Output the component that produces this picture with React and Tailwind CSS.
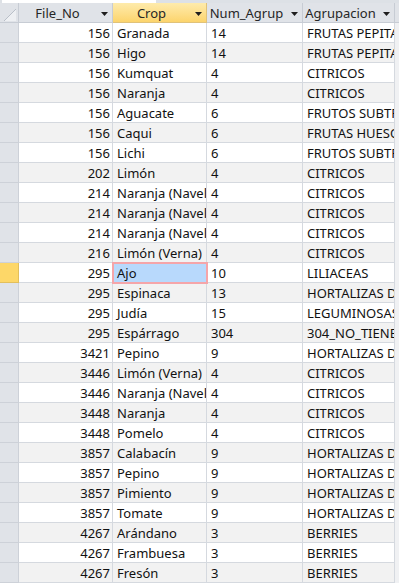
import React from "react";

const rows = [
  ["156", "Granada", "14", "FRUTAS PEPITA"],
  ["156", "Higo", "14", "FRUTAS PEPITA"],
  ["156", "Kumquat", "4", "CITRICOS"],
  ["156", "Naranja", "4", "CITRICOS"],
  ["156", "Aguacate", "6", "FRUTOS SUBTROPICALES"],
  ["156", "Caqui", "6", "FRUTAS HUESO"],
  ["156", "Lichi", "6", "FRUTOS SUBTROPICALES"],
  ["202", "Limón", "4", "CITRICOS"],
  ["214", "Naranja (Navel)", "4", "CITRICOS"],
  ["214", "Naranja (Navel)", "4", "CITRICOS"],
  ["214", "Naranja (Navel)", "4", "CITRICOS"],
  ["216", "Limón (Verna)", "4", "CITRICOS"],
  ["295", "Ajo", "10", "LILIACEAS"],
  ["295", "Espinaca", "13", "HORTALIZAS DE HOJA"],
  ["295", "Judía", "15", "LEGUMINOSAS"],
  ["295", "Espárrago", "304", "304_NO_TIENE_GRUPO"],
  ["3421", "Pepino", "9", "HORTALIZAS DE FRUTO"],
  ["3446", "Limón (Verna)", "4", "CITRICOS"],
  ["3446", "Naranja (Navel)", "4", "CITRICOS"],
  ["3448", "Naranja", "4", "CITRICOS"],
  ["3448", "Pomelo", "4", "CITRICOS"],
  ["3857", "Calabacín", "9", "HORTALIZAS DE FRUTO"],
  ["3857", "Pepino", "9", "HORTALIZAS DE FRUTO"],
  ["3857", "Pimiento", "9", "HORTALIZAS DE FRUTO"],
  ["3857", "Tomate", "9", "HORTALIZAS DE FRUTO"],
  ["4267", "Arándano", "3", "BERRIES"],
  ["4267", "Frambuesa", "3", "BERRIES"],
  ["4267", "Fresón", "3", "BERRIES"],
];

function Arrow() {
  return (
    <div className="w-[16px] shrink-0 flex items-center justify-center pt-[2px]">
      <svg width="7" height="4" viewBox="0 0 7 4">
        <polygon points="0,0 7,0 3.5,4" fill="#1e1e1e" />
      </svg>
    </div>
  );
}

function HeaderCell({ label, w, active }) {
  return (
    <div
      className={`${w} shrink-0 h-full flex items-center border-r border-b ${
        active
          ? "bg-linear-to-b from-[#feebab] to-[#fcd46c] border-[#e0c27a]"
          : "bg-[#e0e3e8] border-[#c7ccd4]"
      }`}
    >
      <div className="flex-1 text-center text-[#262626] whitespace-nowrap">{label}</div>
      <Arrow />
    </div>
  );
}

export default function App() {
  return (
    <div className="w-[399px] h-[583px] overflow-hidden bg-[#eef0f3] font-['Noto_Sans',sans-serif] text-[13px] leading-[18px]">
      {/* tab strip */}
      <div className="h-[3px] flex bg-[#dde1e6]">
        <div className="w-[2px]" />
        <div className="w-[154px] bg-white" />
      </div>
      {/* header */}
      <div className="flex h-[20px]">
        <div className="w-[19px] shrink-0 h-full bg-[#e0e3e8] border-r border-b border-[#c7ccd4] relative">
          <svg width="19" height="20" viewBox="0 0 19 20" className="absolute left-0 top-0">
            <polygon points="16,6 16,18 4,18" fill="#eef0f3" />
            <line x1="4" y1="18" x2="16" y2="6" stroke="#b9bfc8" strokeWidth="1" />
          </svg>
        </div>
        <HeaderCell label="File_No" w="w-[94px]" />
        <HeaderCell label="Crop" w="w-[94px]" active />
        <HeaderCell label="Num_Agrup" w="w-[96px]" />
        <HeaderCell label="Agrupacion" w="w-[92px]" />
        <div className="flex-1 bg-[#e0e3e8] border-b border-[#c7ccd4]" />
      </div>
      {rows.map((r, i) => {
        const selected = i === 12;
        return (
          <div key={i} className={`flex h-[20px] ${i % 2 ? "bg-[#f2f2f2]" : "bg-white"}`}>
            <div
              className={`w-[19px] shrink-0 border-r border-b ${
                selected ? "bg-[#fdd768] border-[#e2bf5c]" : "bg-[#e0e3e8] border-[#cdd1d8]"
              }`}
            />
            <div className="w-[94px] shrink-0 border-r border-b border-[#d5d9df] flex items-center justify-end pr-[2px] text-[#111] whitespace-nowrap overflow-hidden">
              {r[0]}
            </div>
            <div
              className={`w-[94px] shrink-0 border-r border-b flex items-center pl-[4px] text-[#111] whitespace-nowrap overflow-hidden ${
                selected
                  ? "bg-[#b8d9fc] border-[#d5d9df] relative z-10 outline-2 outline-[#f5a5a9] -outline-offset-1 overflow-visible"
                  : "border-[#d5d9df]"
              }`}
            >
              {r[1]}
            </div>
            <div className="w-[96px] shrink-0 border-r border-b border-[#d5d9df] flex items-center pl-[4px] text-[#111] whitespace-nowrap overflow-hidden">
              {r[2]}
            </div>
            <div className="w-[92px] shrink-0 border-r border-b border-[#d5d9df] flex items-center pl-[4px] text-[#111] whitespace-nowrap overflow-hidden">
              {r[3]}
            </div>
            <div className="flex-1 bg-[#f0f1f3]" />
          </div>
        );
      })}
    </div>
  );
}
